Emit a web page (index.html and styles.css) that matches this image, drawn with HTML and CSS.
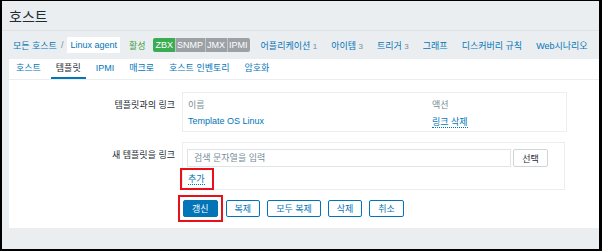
FILE: index.html
```html
<!DOCTYPE html>
<html>
<head>
    <title>호스트</title>
    <link rel="stylesheet" href="styles.css">
</head>
<body>
    <div class="frame">
        <div class="header">
            <h1>호스트</h1>
        </div>
        <div class="nav">
            <a class="crumb">모든 호스트</a>
            <span class="sep">/</span>
            <span class="crumb-current">Linux agent</span>
            <span class="status">활성</span>
            <span class="badges">
                <span class="badge badge-on">ZBX</span><span class="badge">SNMP</span><span class="badge">JMX</span><span class="badge">IPMI</span>
            </span>
            <a class="nav-link">어플리케이션 <span class="count">1</span></a>
            <a class="nav-link">아이템 <span class="count">3</span></a>
            <a class="nav-link">트리거 <span class="count">3</span></a>
            <a class="nav-link">그래프</a>
            <a class="nav-link">디스커버리 규칙</a>
            <a class="nav-link">Web시나리오</a>
        </div>
        <div class="panel">
            <ul class="tabs">
                <li>호스트</li>
                <li class="active">템플릿</li>
                <li>IPMI</li>
                <li>매크로</li>
                <li>호스트 인벤토리</li>
                <li>암호화</li>
            </ul>
            <div class="form">
                <div class="form-row">
                    <div class="label">템플릿과의 링크</div>
                    <div class="box box-linked">
                        <table class="linked">
                            <thead>
                                <tr>
                                    <th>이름</th>
                                    <th class="col-action">액션</th>
                                </tr>
                            </thead>
                            <tbody>
                                <tr>
                                    <td><a class="link">Template OS Linux</a></td>
                                    <td class="col-action"><a class="link link-dashed">링크 삭제</a></td>
                                </tr>
                            </tbody>
                        </table>
                    </div>
                </div>
                <div class="form-row">
                    <div class="label">새 템플릿을 링크</div>
                    <div class="box box-new">
                        <div class="search">
                            <input type="text" class="search-input" placeholder="검색 문자열을 입력">
                            <button class="btn-select">선택</button>
                        </div>
                        <span class="mark mark-add"><a class="link link-dashed">추가</a></span>
                    </div>
                </div>
                <div class="buttons">
                    <span class="mark mark-update"><button class="btn btn-primary">갱신</button></span>
                    <button class="btn">복제</button>
                    <button class="btn">모두 복제</button>
                    <button class="btn">삭제</button>
                    <button class="btn">취소</button>
                </div>
            </div>
        </div>
    </div>
</body>
</html>
```

FILE: styles.css
```css
body {
    margin: 0;
    background-color: #000;
}

.frame {
    margin: 1px 0 0 2px;
    width: 597px;
    height: 248px;
    background-color: #ebeef0;
    overflow: hidden;
    font-family: 'Liberation Sans', Arial, 'Noto Sans CJK KR', sans-serif;
    font-size: 9px;
    color: #1f2c33;
}

.header {
    height: 29px;
    border-bottom: 1px solid #dde2e5;
    padding-left: 7px;
    display: flex;
    align-items: center;
}

h1 {
    margin: 0;
    font-size: 14px;
    font-weight: normal;
    color: #1f2c33;
}

.nav {
    height: 28px;
    display: flex;
    align-items: center;
    padding-left: 11px;
    white-space: nowrap;
}

.nav > * {
    flex-shrink: 0;
}

.crumb, .nav-link {
    color: #0275b8;
}

.sep {
    margin: 0 4px;
    color: #768d99;
}

.crumb-current {
    background-color: #fff;
    padding: 3px 3px;
    color: #0275b8;
}

.status {
    color: #429e47;
    margin-left: 9px;
}

.badges {
    display: flex;
    margin-left: 7px;
    margin-right: 11px;
    border-radius: 2px;
    overflow: hidden;
}

.badge {
    background-color: #9ba1a5;
    color: #fff;
    padding: 2px 2px 2px 1px;
    border-left: 1px solid #c2c6c9;
}

.badge-on {
    padding-left: 3px;
    background-color: #3aac52;
    border-left: none;
}

.nav-link {
    margin-right: 14px;
}

.count {
    color: #768d99;
    font-size: 8px;
}

.panel {
    margin-left: 7px;
    height: 169px;
    background-color: #fff;
}

.tabs {
    list-style: none;
    margin: 0;
    padding: 0 0 0 2px;
    height: 20px;
    display: flex;
    border-bottom: 1px solid #ebeef0;
}

.tabs li {
    padding: 0 5px;
    margin-right: 5px;
    line-height: 18px;
    color: #0275b8;
    border-bottom: 2px solid transparent;
}

.tabs li.active {
    color: #1f2c33;
    border-bottom-color: #0275b8;
}

.form {
    padding-top: 12px;
}

.form-row {
    display: flex;
    margin-bottom: 10px;
}

.label {
    width: 166px;
    text-align: right;
    padding-right: 7px;
    padding-top: 6px;
}

.box {
    width: 383px;
    border: 1px solid #ebeef0;
}

.box-linked {
    height: 38px;
}

.linked {
    border-collapse: collapse;
    width: 100%;
}

.linked th, .linked td {
    text-align: left;
    padding: 0 0 0 5px;
}

.linked th {
    font-weight: normal;
    color: #768d99;
    height: 18px;
    padding-top: 2px;
}

.linked td {
    height: 16px;
}

.col-action {
    width: 134px;
}

.link {
    color: #0275b8;
}

.link-dashed {
    border-bottom: 1px dotted #0275b8;
}

.box-new {
    height: 48px;
    padding: 6px 0 0 4px;
    box-sizing: border-box;
}

.search {
    display: flex;
}

.search-input {
    width: 324px;
    height: 18px;
    box-sizing: border-box;
    border: 1px solid #dfe4e7;
    padding: 0 6px;
    font-family: inherit;
    font-size: 9px;
}

.search-input::placeholder {
    color: #768d99;
}

.btn-select {
    margin-left: 2px;
    width: 35px;
    height: 18px;
    border: 1px solid #cfd6da;
    background-color: #fff;
    border-radius: 2px;
    font-family: inherit;
    font-size: 9px;
    color: #1f2c33;
}

.mark {
    display: inline-block;
    border: 2px solid #e8111a;
}

.mark-add {
    margin: 1px 0 0 -7px;
    padding: 2px 7px 3px 6px;
}

.buttons {
    display: flex;
    align-items: center;
    margin-left: 169px;
    margin-top: -5px;
}

.mark-update {
    display: flex;
    padding: 3px 3px;
    margin-right: 3px;
}

.btn {
    height: 17px;
    padding: 0 8px;
    margin-right: 7px;
    background-color: #fff;
    border: 1px solid #0275b8;
    border-radius: 2px;
    color: #0275b8;
    font-family: inherit;
    font-size: 9px;
    white-space: nowrap;
}

.btn-primary {
    margin-right: 0;
    background-color: #0275b8;
    color: #fff;
}
```
